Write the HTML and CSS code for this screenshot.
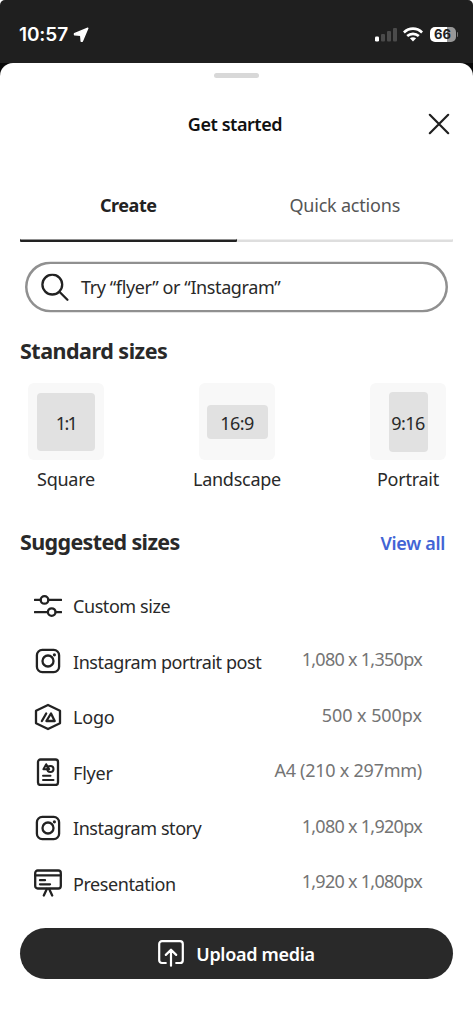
FILE: index.html
```
<!DOCTYPE html>
<html lang="en">
<head>
<meta charset="utf-8">
<meta name="viewport" content="width=device-width, initial-scale=1">
<title>Get started</title>
<link rel="stylesheet" href="styles.css">
</head>
<body>
<svg class="defs" aria-hidden="true">
  <symbol id="camera" viewBox="0 0 28 28"><rect x="2.900" y="2.900" width="22.200" height="22.200" rx="5.400"/><circle cx="14" cy="14" r="5.500"/><circle cx="20.400" cy="7.800" r="1.600" fill="currentColor" stroke="none"/></symbol>
</svg>
<div class="phone">
  <header class="status">
    <div class="clock"><span>10:57</span>
      <svg width="16" height="16" viewBox="0 0 16 16"><path d="M14.800 1.200 9.300 14.300 8.200 14.300 7.700 8.300 1.500 7.800 1.500 6.700z" fill="#fff" stroke="#fff" stroke-width="1.400"/></svg>
    </div>
    <div class="indicators">
      <svg width="22" height="15" viewBox="0 0 22 15"><rect y="9.500" width="4" height="5" rx="1.200" fill="#fff"/><g fill="#4b4b4b"><rect x="6" y="7" width="4" height="7.500" rx="1"/><rect x="12" y="4" width="4" height="10.500" rx="1"/><rect x="18" y="1" width="4" height="13.500" rx="1"/></g></svg>
      <svg width="20" height="15" viewBox="0 0 20 15"><g fill="none" stroke="#fff" stroke-width="2.700" stroke-linecap="butt"><path d="M.9 5.400C6.200.4 13.800.4 19.100 5.400"/><path d="M4.200 9c3.300-2.900 8.300-2.900 11.600 0"/></g><path d="M10 14.400 6.900 11.300c1.800-1.500 4.400-1.500 6.200 0z" fill="#fff"/></svg>
      <div class="battery"><span>66</span></div><i class="battery-tip"></i>
    </div>
  </header>
  <main class="sheet">
    <div class="handle"></div>
    <div class="titlebar">
      <h1>Get started</h1>
      <svg class="close" width="22" height="22" viewBox="0 0 22 22"><path d="m1.800 1.800 18.400 18.400M20.200 1.800 1.800 20.200"/></svg>
    </div>
    <nav class="tabs">
      <div class="tab active">Create</div>
      <div class="tab">Quick actions</div>
    </nav>
    <div class="search">
      <svg width="28" height="28" viewBox="0 0 28 28"><circle cx="11.300" cy="11.200" r="9.900"/><path d="m18.400 18.400 8 7.900"/></svg>
      <span>Try “flyer” or “Instagram”</span>
    </div>
    <h2 class="standard-title">Standard sizes</h2>
    <section class="standards">
      <div class="size"><div class="tile"><div class="shape square"><span>1:1</span></div></div><span class="label">Square</span></div>
      <div class="size"><div class="tile"><div class="shape landscape"><span>16:9</span></div></div><span class="label">Landscape</span></div>
      <div class="size"><div class="tile"><div class="shape portrait"><span>9:16</span></div></div><span class="label">Portrait</span></div>
    </section>
    <div class="suggested-head"><h2>Suggested sizes</h2><a>View all</a></div>
    <section class="list">
      <div class="row"><svg class="icon" viewBox="0 0 28 28"><path d="M.8 7.900h5.800M14.400 7.900h12.800M.8 20.100h13M21.700 20.100h5.500"/><circle cx="10.500" cy="7.900" r="3.800"/><circle cx="17.700" cy="20.100" r="3.800"/></svg><span class="name">Custom size</span></div>
      <div class="row"><svg class="icon"><use href="#camera"/></svg><span class="name">Instagram portrait post</span><span class="dims thousands">1,080 x 1,350px</span></div>
      <div class="row"><svg class="icon" viewBox="0 0 28 28"><path d="m14 2 12 5.700v12.600L14 26 2 20.300V7.700z"/><path d="m7.900 18 4.300-7.500M12.400 18l4.600-7.500 3.700 7.500z"/></svg><span class="name wide">Logo</span><span class="dims">500 x 500px</span></div>
      <div class="row"><svg class="icon" viewBox="0 0 28 28"><rect x="4" y="1.500" width="20" height="25.500" rx="2.500"/><g stroke-width="2"><path d="M9.400 11.200 12.200 6.200l3 5z"/><circle cx="16.400" cy="11" r="3.100"/><path d="M9 17.800h7.500M9 22h10.500"/></g></svg><span class="name wide">Flyer</span><span class="dims a4">A4 (210 x 297mm)</span></div>
      <div class="row"><svg class="icon"><use href="#camera"/></svg><span class="name">Instagram story</span><span class="dims thousands">1,080 x 1,920px</span></div>
      <div class="row"><svg class="icon" viewBox="0 0 28 28"><rect x="1.200" y="1.500" width="25.600" height="18" rx="2.500"/><path d="M1.200 6.400h25.600M6 11.200h5M6 15.300h10M12.800 20l-3 6.500M15.200 20l3 6.500"/></svg><span class="name">Presentation</span><span class="dims thousands">1,920 x 1,080px</span></div>
    </section>
    <button class="upload">
      <svg width="26" height="27" viewBox="0 0 26 27"><path d="M7.800 23H4a2.800 2.800 0 0 1-2.800-2.800V4A2.800 2.800 0 0 1 4 1.200h18A2.800 2.800 0 0 1 24.800 4v16.200A2.800 2.800 0 0 1 22 23h-3.800M13 25.700V10M7.800 14.900 13 9.700l5.200 5.200"/></svg>
      <span>Upload media</span>
    </button>
  </main>
</div>
</body>
</html>
```
FILE: styles.css
```
* { box-sizing: border-box; }
body { margin: 0; background: #fff; font-family: "Noto Sans", sans-serif; font-size: 18px; line-height: 24px; color: #292929; }
h1, h2 { margin: 0; }
svg { display: block; flex: none; fill: none; stroke-linecap: round; stroke-linejoin: round; }
.defs { position: absolute; width: 0; height: 0; }
.phone { width: 473px; height: 1024px; overflow: hidden; background: linear-gradient(#1f1f1f 63px, #080808 63px, #080808 100px, #fff 100px); border-radius: 5px 5px 0 0; }
.status { height: 63px; padding: 6px 15px 0 19px; display: flex; align-items: center; justify-content: space-between; color: #fff; }
.clock { display: flex; align-items: center; gap: 5px; font: 600 19px/24px Inter, sans-serif; letter-spacing: -.1px; }
.indicators { display: flex; align-items: center; }
.indicators svg + svg { margin-left: 6px; }
.battery { width: 26px; height: 15px; margin-left: 7px; border-radius: 5px; background: linear-gradient(90deg, #fff 66%, #989898 66%); color: #1f1f1f; font: 700 13px/15px Inter, sans-serif; text-align: center; }
.battery-tip { width: 1.500px; height: 5px; margin-left: 1px; background: #777; border-radius: 0 2px 2px 0; }
.sheet { height: 961px; padding: 10px 20px 0; background: #fff; border-radius: 13px 13px 0 0; display: flex; flex-direction: column; }
.handle { width: 45px; height: 5px; margin: 0 auto; border-radius: 3px; background: #d8d8d8; }
.titlebar { height: 24px; margin-top: 34px; padding-right: 3px; display: grid; grid-template-columns: 22px 1fr 22px; align-items: center; }
.titlebar h1 { grid-column: 2; font-size: 18px; line-height: 24px; font-weight: 600; letter-spacing: -.45px; text-align: center; color: #111; }
.close { stroke: #202020; stroke-width: 2.200; }
.tabs { height: 50px; margin-top: 57px; display: grid; grid-template-columns: 1fr 1fr; }
.tab { text-align: center; height: 49px; box-shadow: inset 0 -2.500px #dedede; color: #555; letter-spacing: -.2px; border-radius: 1px; }
.tab.active { box-shadow: inset 0 -2.500px #222; color: #222; font-weight: 700; letter-spacing: -.45px; }
.search { height: 51px; margin: 18px 5px 0; box-shadow: inset 0 0 0 2.500px #909090; border-radius: 26px; padding-left: 16px; display: flex; align-items: center; gap: 12px; letter-spacing: -.4px; transform: translateY(.4px); }
.search svg { stroke: #222; stroke-width: 2.300; }
h2 { font-size: 21.500px; line-height: 28px; font-weight: 700; letter-spacing: -.5px; }
.standard-title { margin-top: 25px; }
.standards { margin: 18px 7px 0 8px; display: flex; justify-content: space-between; }
.size { width: 76px; display: flex; flex-direction: column; align-items: center; gap: 7px; }
.tile { width: 76px; height: 77px; border-radius: 6px; background: #f8f8f8; display: grid; place-items: center; }
.shape { display: grid; place-items: center; background: #e1e1e1; border-radius: 4px; letter-spacing: -.6px; padding-top: 2px; }
.square { width: 58px; height: 58px; letter-spacing: -1.700px; }
.landscape { width: 61px; height: 34px; }
.portrait { width: 39px; height: 60px; }
.label { white-space: nowrap; letter-spacing: -.25px; }
.suggested-head { margin-top: 37px; padding-right: 8px; height: 28px; display: flex; justify-content: space-between; align-items: center; }
.suggested-head h2 { letter-spacing: -.65px; }
.suggested-head a { color: #4264d5; font-weight: 600; letter-spacing: -.3px; padding-top: 2px; }
.list { margin: 22px 31px 0 14px; }
.row { height: 55.500px; display: flex; align-items: center; }
.icon { width: 28px; height: 28px; margin-right: 11px; color: #222; stroke: currentColor; stroke-width: 2.300; }
.name { letter-spacing: -.43px; padding-top: 1px; white-space: nowrap; }
.wide { letter-spacing: -.2px; }
.dims { margin-left: auto; margin-bottom: 4px; color: #747474; white-space: nowrap; letter-spacing: -.05px; }
.thousands { letter-spacing: -.72px; }
.a4 { letter-spacing: -.25px; }
.upload { height: 51px; width: 433px; flex: none; margin-top: 17px; padding: 0; border: 0; border-radius: 26px; background: #292929; color: #fff; display: flex; align-items: center; justify-content: center; gap: 12px; font: 600 18px/24px "Noto Sans", sans-serif; letter-spacing: -.3px; }
.upload svg { stroke: #fff; stroke-width: 2.200; }
```
